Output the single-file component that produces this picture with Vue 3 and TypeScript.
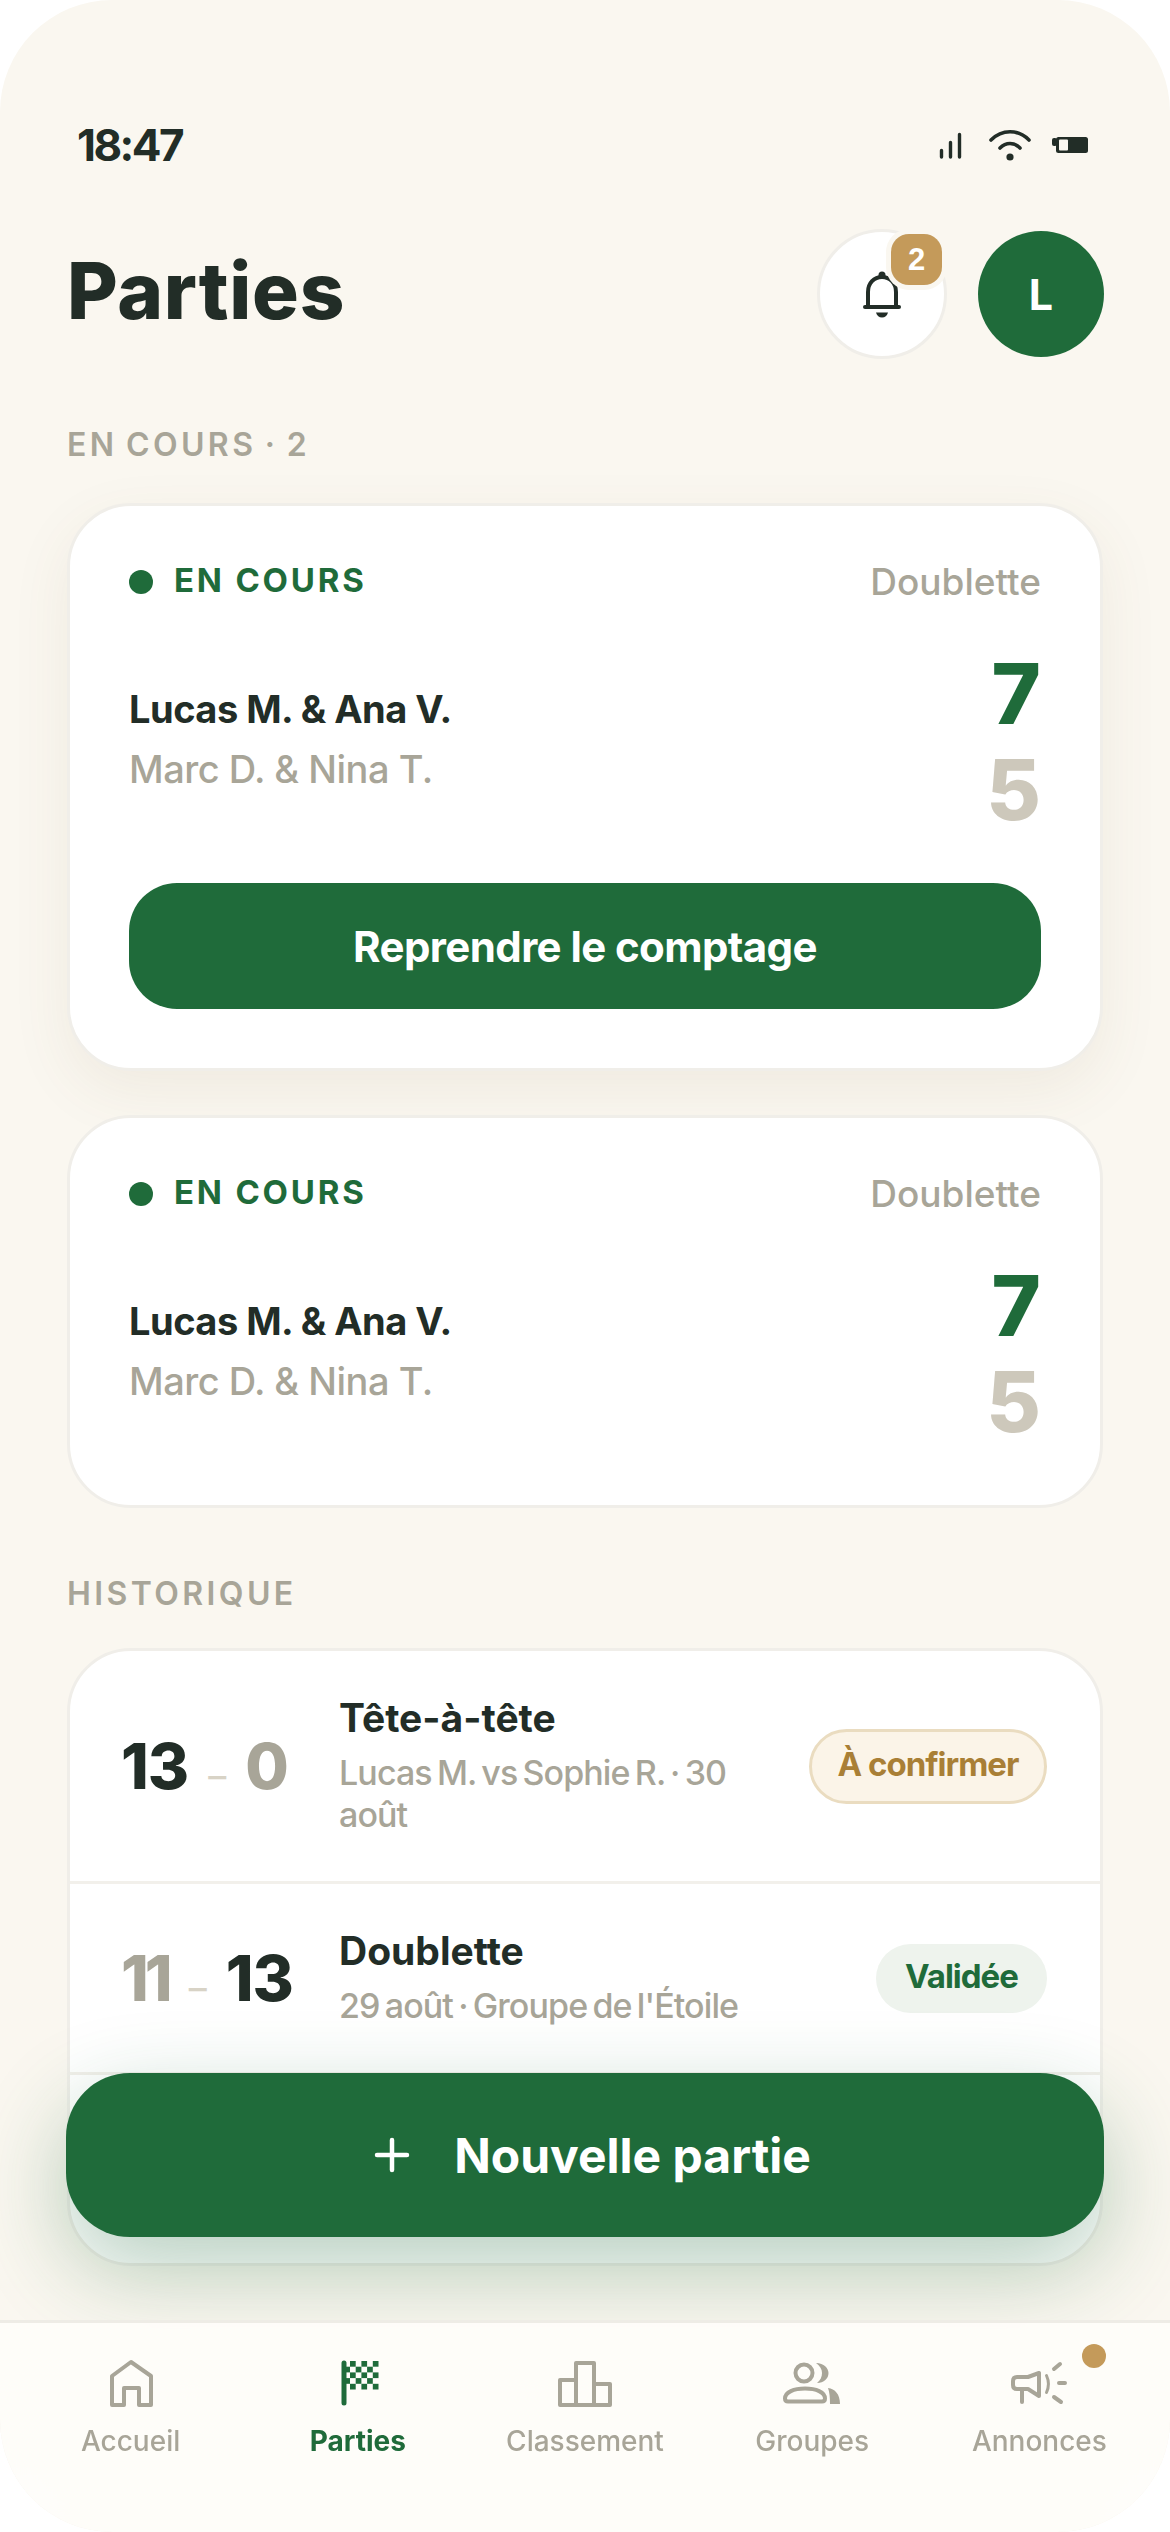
<script setup lang="ts">
interface Match { tag: string; left: string; right: string; a: string; b: string; active: boolean }
const live: Match[] = [
  { tag: 'EN COURS', left: 'Lucas M. & Ana V.', right: 'Marc D. & Nina T.', a: '7', b: '5', active: true },
  { tag: 'EN COURS', left: 'Lucas M. & Ana V.', right: 'Marc D. & Nina T.', a: '7', b: '5', active: false },
]
const cells: { x: number; y: number }[] = []
for (let r = 0; r < 5; r++) {
  for (let c = -1; c < 5; c++) {
    if ((r + c + 2) % 2 === 0 && !(c === -1 && r % 2 === 0)) cells.push({ x: 22 + c * 5.7, y: 7 + r * 5.7 })
  }
}
</script>

<template>
  <div class="phone">
    <main class="content">
      <div class="status">
        <span class="time">18:47</span>
        <svg class="status-icons" width="156" height="40" viewBox="0 0 156 40">
          <g fill="none" stroke="#222d27" stroke-linecap="round">
            <path d="M7.500 25.500V32M16.500 17.500V32M25.500 9.500V32" stroke-width="3.400" />
            <path d="M57 15C68 4 84 4 95 15" stroke-width="3.600" />
            <path d="M66 23C72 17 80 17 86 23" stroke-width="3.600" />
          </g>
          <circle cx="76" cy="32" r="3.600" fill="#222d27" />
          <rect x="118" y="13" width="5" height="8" rx="2" fill="#222d27" />
          <rect x="122" y="12" width="32" height="16" rx="2.500" fill="#222d27" />
          <rect x="125" y="14.500" width="9" height="11" rx="1" fill="#faf7f0" />
        </svg>
      </div>

      <header class="top">
        <h1>Parties</h1>
        <div class="top-actions">
          <button class="bell">
            <svg class="bell-icon" width="48" height="56" viewBox="0 0 48 56" fill="none">
              <path d="M10 38V24C10 15 16 9 24 9C32 9 38 15 38 24V38" stroke="#222d27" stroke-width="4" />
              <circle cx="24" cy="7" r="3.500" fill="#222d27" />
              <path d="M7 39H41" stroke="#222d27" stroke-width="4" stroke-linecap="round" />
              <path d="M18 44.500H30C29 48 27 49.500 24 49.500C21 49.500 19 48 18 44.500Z" fill="#222d27" />
            </svg>
            <span class="badge">2</span>
          </button>
          <div class="avatar">L</div>
        </div>
      </header>

      <h2 class="section first">EN COURS · 2</h2>
      <article v-for="(m, i) in live" :key="i" class="card" :class="{ raised: m.active }">
        <div class="card-head">
          <span class="live"><i></i><span class="live-text">{{ m.tag }}</span></span>
          <span class="mode">Doublette</span>
        </div>
        <div class="versus">
          <div class="names">
            <div class="n1">{{ m.left }}</div>
            <div class="n2">{{ m.right }}</div>
          </div>
          <div class="scores">
            <div class="s1">{{ m.a }}</div>
            <div class="s2">{{ m.b }}</div>
          </div>
        </div>
        <button v-if="m.active" class="resume">Reprendre le comptage</button>
      </article>

      <h2 class="section second">HISTORIQUE</h2>
      <section class="history">
        <div class="row">
          <div class="final"><b class="win">13</b><i>–</i><b class="lose">0</b></div>
          <div class="info">
            <div class="title">Tête-à-tête</div>
            <div class="sub">Lucas M. vs Sophie R. · 30 août</div>
          </div>
          <span class="pill pending"><span>À confirmer</span></span>
        </div>
        <div class="row">
          <div class="final"><b class="lose narrow">11</b><i>–</i><b class="win">13</b></div>
          <div class="info">
            <div class="title">Doublette</div>
            <div class="sub">29 août · Groupe de l'Étoile</div>
          </div>
          <span class="pill ok"><span>Validée</span></span>
        </div>
        <div class="row empty"></div>
      </section>
    </main>

    <button class="fab">
      <svg width="36" height="36" viewBox="0 0 36 36"><path d="M18 3V33M3 18H33" stroke="#fff" stroke-width="4.500" stroke-linecap="round" /></svg>
      <span>Nouvelle partie</span>
    </button>

    <nav class="tabs">
      <div class="tab">
        <svg width="60" height="60" viewBox="0 0 60 60" fill="none" stroke="currentColor" stroke-width="4" stroke-linejoin="round" stroke-linecap="round">
          <path d="M11 51V22L30 8L50 22V51H38V34H23V51Z" />
        </svg>
        <span>Accueil</span>
      </div>
      <div class="tab on">
        <svg width="60" height="60" viewBox="0 0 60 60" fill="none">
          <path d="M16 9V49" stroke="currentColor" stroke-width="5" stroke-linecap="round" />
          <rect v-for="(c, i) in cells" :key="i" :x="c.x" :y="c.y" width="5.700" height="5.700" fill="currentColor" />
        </svg>
        <span>Parties</span>
      </div>
      <div class="tab">
        <svg width="60" height="60" viewBox="0 0 60 60" fill="none" stroke="currentColor" stroke-width="4" stroke-linejoin="round">
          <path d="M5 51V26H21V9H39V30H55V51Z" />
          <path d="M21 26V51M39 30V51" />
        </svg>
        <span>Classement</span>
      </div>
      <div class="tab">
        <svg width="60" height="60" viewBox="0 0 60 60" fill="none">
          <circle cx="22" cy="19" r="8.500" stroke="currentColor" stroke-width="4" />
          <path d="M6 47.500C3.500 47.500 3 46 3 44.500C3 38 12 34.500 23 34.500C34 34.500 43 38 43 44.500C43 46 42.500 47.500 40 47.500Z" stroke="currentColor" stroke-width="4" stroke-linejoin="round" />
          <path d="M34 9C42 9.500 46.500 14 46.500 19C46.500 24.500 42 29 35 29C38.500 26 40 23 40 19C40 15 38 12 34 9Z" fill="currentColor" />
          <path d="M46 34C53 35 58 40 58 50H48C48 43 47.500 38 46 34Z" fill="currentColor" />
        </svg>
        <span>Groupes</span>
      </div>
      <div class="tab">
        <svg width="60" height="60" viewBox="0 0 60 60" fill="none" stroke="currentColor" stroke-width="4" stroke-linecap="round" stroke-linejoin="round">
          <path d="M30 19V42L19 35H8C5 35 4 33 4 31V27C4 25 5 23 8 23H19Z" />
          <path d="M13 36V48" />
          <path d="M37.500 21.500C40 27 40 33 37.500 38.500" stroke-width="3" />
          <path d="M45 15L51 10M50 29H56M45 43L52 48" />
        </svg>
        <span>Annonces</span>
        <i class="ping"></i>
      </div>
    </nav>
  </div>
</template>

<style>
html, body { margin: 0; background: #fff; }
</style>

<style scoped>
.phone {
  position: relative;
  width: 1170px;
  height: 2532px;
  overflow: hidden;
  background: #faf7f0;
  border-radius: 112px;
  font-family: Inter, "Liberation Sans", sans-serif;
  color: #222d27;
}
.content { padding: 0 67px; }
.status {
  height: 229px;
  box-sizing: border-box;
  padding: 120px 13px 0 10px;
  display: flex;
  justify-content: space-between;
  align-items: flex-start;
}
.time { font-size: 44px; line-height: 50px; font-weight: 700; letter-spacing: -2.500px; }
.status-icons { margin-top: 5px; }
.top { display: flex; justify-content: space-between; align-items: center; height: 130px; }
h1 { margin: -6px 0 0; font-size: 78px; line-height: 90px; font-weight: 800; letter-spacing: 0.700px; }
.top-actions { display: flex; gap: 31px; align-items: center; margin-right: -1px; }
.bell {
  position: relative;
  width: 130px;
  height: 130px;
  padding: 0;
  box-sizing: border-box;
  border-radius: 50%;
  background: #fff;
  border: 3px solid #f0eee9;
  display: flex;
  align-items: center;
  justify-content: center;
}
.bell-icon { margin-top: 4px; }
.badge {
  position: absolute;
  top: 2px;
  right: 2px;
  width: 51px;
  height: 51px;
  border-radius: 18px;
  background: #c49a5a;
  color: #fff;
  font-size: 31px;
  font-weight: 700;
  line-height: 51px;
  text-align: center;
  box-shadow: 0 0 0 5px #faf7f0;
}
.avatar {
  width: 126px;
  height: 126px;
  border-radius: 50%;
  background: #1f6b3a;
  color: #fff;
  font-size: 43px;
  font-weight: 700;
  display: flex;
  align-items: center;
  justify-content: center;
}
.section {
  margin: 0;
  font-size: 32px;
  line-height: 40px;
  font-weight: 600;
  letter-spacing: 3.400px;
  word-spacing: -3px;
  color: #a8a598;
}
.section.first { margin: 66px 0 38px; }
.section.second { margin: 66px 0 34px; }
.card {
  box-sizing: border-box;
  background: #fff;
  border: 3px solid #f0eee9;
  border-radius: 64px;
  padding: 55px 59px;
  margin-bottom: 44px;
}
.card.raised { box-shadow: 0 20px 60px rgba(110, 90, 50, 0.08); }
.card-head { display: flex; justify-content: space-between; align-items: center; height: 42px; }
.live { display: flex; align-items: center; gap: 21px; font-size: 33px; font-weight: 700; letter-spacing: 2.800px; color: #1f6b3a; }
.live-text { margin-bottom: 5px; }
.live i { width: 24px; height: 24px; border-radius: 50%; background: #1f6b3a; }
.mode { font-size: 37px; font-weight: 500; color: #a8a598; margin-bottom: 2px; }
.versus { display: flex; justify-content: space-between; align-items: center; margin-top: 43px; }
.names { display: flex; flex-direction: column; gap: 10px; margin-bottom: 7px; }
.n1 { font-size: 38px; line-height: 50px; font-weight: 700; letter-spacing: -0.500px; }
.n2 { font-size: 38px; line-height: 50px; font-weight: 500; letter-spacing: -0.500px; color: #a8a598; }
.scores { text-align: right; font-size: 84px; line-height: 96px; font-weight: 800; }
.s1 { color: #1f6b3a; }
.s2 { color: #cdc8bb; }
.resume {
  display: block;
  width: 100%;
  height: 126px;
  margin: 45px 0 4px;
  border: 0;
  border-radius: 48px;
  background: #1f6b3a;
  color: #fff;
  font-family: inherit;
  font-size: 42px;
  font-weight: 700;
  letter-spacing: -0.600px;
}
.history {
  background: #fff;
  border: 3px solid #f0eee9;
  border-radius: 64px;
  overflow: hidden;
  box-sizing: border-box;
  height: 618px;
}
.row { display: flex; align-items: center; padding: 45px 53px 45px 51px; border-bottom: 3px solid #f2f0eb; }
.row.empty { border-bottom: 0; }
.final { width: 218px; flex: none; display: flex; align-items: baseline; gap: 20px; font-size: 63px; font-weight: 800; letter-spacing: -1px; }
.final b { font-weight: 800; }
.final .narrow { letter-spacing: -4px; }
.final i { font-style: normal; font-size: 36px; font-weight: 500; color: #d8d3c6; }
.win { color: #222d27; }
.lose { color: #a8a598; }
.info { flex: 1; min-width: 0; padding-right: 40px; }
.title { font-size: 39px; line-height: 44px; font-weight: 700; }
.sub { margin-top: 12px; font-size: 34px; line-height: 42px; font-weight: 500; letter-spacing: -0.900px; word-spacing: -3px; color: #a8a598; }
.pill { flex: none; box-sizing: border-box; border-radius: 40px; display: flex; align-items: center; justify-content: center; font-size: 33px; font-weight: 700; letter-spacing: -1px; }
.pill span { margin-bottom: 5px; }
.pending { width: 238px; height: 75px; background: #fbf4e8; border: 3px solid #eadcc0; color: #a97f36; }
.ok { width: 171px; height: 69px; background: #eef3ed; color: #1f6b3a; }
.fab {
  position: absolute;
  left: 66px;
  right: 66px;
  top: 2073px;
  height: 164px;
  padding: 0 0 0 15px;
  border: 0;
  border-radius: 64px;
  background: #1f6b3a;
  color: #fff;
  font-family: inherit;
  font-size: 48px;
  font-weight: 700;
  display: flex;
  align-items: center;
  justify-content: center;
  gap: 44px;
  box-shadow: 0 32px 90px rgba(31, 107, 58, 0.32);
}
.tabs {
  position: absolute;
  left: 0;
  right: 0;
  top: 2320px;
  bottom: 0;
  box-sizing: border-box;
  padding: 31px 17px 0;
  display: grid;
  grid-template-columns: repeat(5, 1fr);
  align-items: start;
  background: rgba(254, 253, 250, 0.92);
  backdrop-filter: blur(24px);
  border-top: 3px solid #eeece6;
}
.tab { position: relative; display: flex; flex-direction: column; align-items: center; color: #a8a598; font-size: 28px; line-height: 38px; font-weight: 500; }
.tab span { margin-top: 8px; }
.tab.on { color: #1f6b3a; font-weight: 700; }
.ping { position: absolute; top: -10px; right: 47px; width: 24px; height: 24px; border-radius: 50%; background: #c49a5a; }
</style>
